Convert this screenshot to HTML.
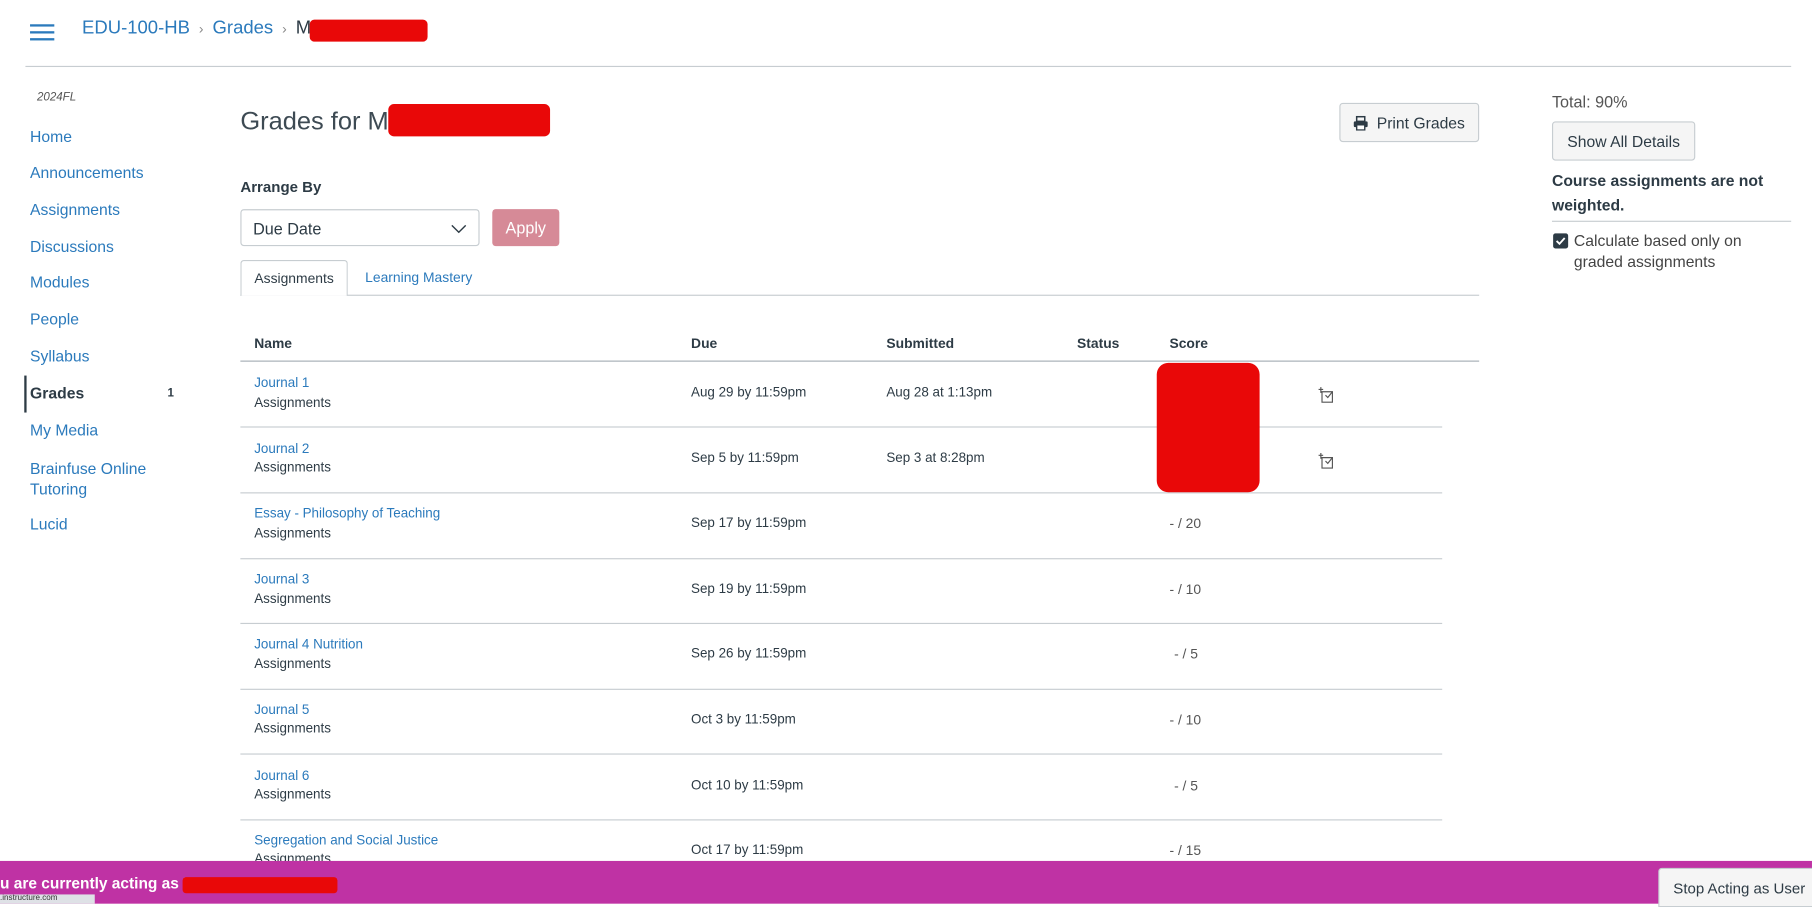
<!DOCTYPE html>
<html><head><meta charset="utf-8"><style>
*{box-sizing:border-box;margin:0;padding:0}
html,body{width:1812px;height:904px;overflow:hidden;background:#fff}
#s{position:absolute;left:0;top:0;width:1568px;height:782px;transform:scale(1.1556);transform-origin:0 0;font-family:"Liberation Sans",sans-serif;color:#2d3b45}
.a{position:absolute;white-space:nowrap}
.l{color:#2b7abc}
.nav{font-size:13.6px;left:26px}
.th{font-size:12px;font-weight:bold;top:290px}
.sep{position:absolute;left:208px;width:1040px;height:1px;background:#c7cdd1}
.t1{font-size:11.6px;color:#2b7abc;left:220px}
.t2{font-size:11.6px;left:220px}
.d{font-size:11.6px;left:598px}
.sc{font-size:12px;left:1012px;color:#555}
.btn{position:absolute;background:#f5f5f5;border:1px solid #c7cdd1;border-radius:3px;font-size:13.6px;display:flex;align-items:center;justify-content:center}
</style></head><body><div id="s">
<div class="a" style="left:26px;top:21px;width:21px;height:2px;background:#2b7abc"></div>
<div class="a" style="left:26px;top:27px;width:21px;height:2px;background:#2b7abc"></div>
<div class="a" style="left:26px;top:33px;width:21px;height:2px;background:#2b7abc"></div>
<div class="a l" style="left:71px;top:16px;font-size:16px">EDU-100-HB <span style="color:#888;font-size:12px">&nbsp;›&nbsp;</span> Grades <span style="color:#888;font-size:12px">&nbsp;›&nbsp;</span> <span style="color:#2d3b45">M</span></div>
<div class="a" style="left:268px;top:17px;width:102px;height:19px;background:#e90808;border-radius:4px"></div>
<div class="a" style="left:22px;top:57px;width:1528px;height:1px;background:#c7cdd1"></div>
<div class="a" style="left:32px;top:79px;font-size:10px;font-style:italic;color:#555">2024FL</div>
<div class="a nav l" style="top:111px">Home</div>
<div class="a nav l" style="top:142px">Announcements</div>
<div class="a nav l" style="top:174px">Assignments</div>
<div class="a nav l" style="top:206px">Discussions</div>
<div class="a nav l" style="top:237px">Modules</div>
<div class="a nav l" style="top:269px">People</div>
<div class="a nav l" style="top:301px">Syllabus</div>
<div class="a" style="left:21px;top:325px;width:2px;height:32px;background:#2d3b45"></div>
<div class="a nav" style="top:333px;font-weight:bold">Grades</div>
<div class="a" style="left:145px;top:335px;font-size:10px;font-weight:bold">1</div>
<div class="a nav l" style="top:365px">My Media</div>
<div class="a nav l" style="top:397px;line-height:18px">Brainfuse Online<br>Tutoring</div>
<div class="a nav l" style="top:446px">Lucid</div>
<div class="a" style="left:208px;top:92px;font-size:22px;color:#3d4a53">Grades for M</div>
<div class="a" style="left:336px;top:90px;width:140px;height:28px;background:#e90808;border-radius:5px"></div>
<div class="btn" style="left:1159px;top:89px;width:121px;height:34px"><svg width="13" height="13" viewBox="0 0 13 13" style="margin-right:7px"><rect x="3" y="1" width="7" height="4" fill="none" stroke="#2d3b45" stroke-width="1.3"/><rect x="0.5" y="5" width="12" height="5" rx="1" fill="#2d3b45"/><rect x="3" y="8" width="7" height="4.5" fill="#fff" stroke="#2d3b45" stroke-width="1.2"/></svg>Print Grades</div>
<div class="a" style="left:208px;top:154px;font-size:13px;font-weight:bold">Arrange By</div>
<div class="a" style="left:208px;top:181px;width:207px;height:32px;border:1px solid #c7cdd1;border-radius:3px;font-size:14px;padding:8px 10px">Due Date<svg width="14" height="8" style="position:absolute;right:10px;top:12px"><path d="M1 1l6 6 6-6" fill="none" stroke="#2d3b45" stroke-width="1.2"/></svg></div>
<div class="a" style="left:426px;top:181px;width:58px;height:32px;background:#d68a97;border-radius:3px;color:#fff;font-size:14px;display:flex;align-items:center;justify-content:center">Apply</div>
<div class="a" style="left:208px;top:255px;width:1072px;height:1px;background:#c7cdd1"></div>
<div class="a" style="left:208px;top:225px;width:93px;height:31px;border:1px solid #c7cdd1;border-bottom:none;background:#fff;border-radius:3px 3px 0 0;font-size:12px;text-align:center;padding-top:8px">Assignments</div>
<div class="a l" style="left:316px;top:233px;font-size:12px">Learning Mastery</div>
<div class="a th" style="left:220px">Name</div>
<div class="a th" style="left:598px">Due</div>
<div class="a th" style="left:767px">Submitted</div>
<div class="a th" style="left:932px">Status</div>
<div class="a th" style="left:1012px">Score</div>
<div class="a" style="left:208px;top:312px;width:1072px;height:1px;background:#a5afb5"></div>
<div class="sep" style="top:369px"></div><div class="sep" style="top:426px"></div><div class="sep" style="top:483px"></div><div class="sep" style="top:539px"></div><div class="sep" style="top:596px"></div><div class="sep" style="top:652px"></div><div class="sep" style="top:709px"></div>

<div class="a t1" style="top:325px">Journal 1</div><div class="a t2" style="top:342px">Assignments</div><div class="a d" style="top:333px">Aug 29 by 11:59pm</div><div class="a d" style="left:767px;top:333px">Aug 28 at 1:13pm</div>
<div class="a t1" style="top:382px">Journal 2</div><div class="a t2" style="top:398px">Assignments</div><div class="a d" style="top:390px">Sep 5 by 11:59pm</div><div class="a d" style="left:767px;top:390px">Sep 3 at 8:28pm</div>
<div class="a t1" style="top:438px">Essay - Philosophy of Teaching</div><div class="a t2" style="top:455px">Assignments</div><div class="a d" style="top:446px">Sep 17 by 11:59pm</div><div class="a sc" style="top:446px">- / 20</div>
<div class="a t1" style="top:495px">Journal 3</div><div class="a t2" style="top:512px">Assignments</div><div class="a d" style="top:503px">Sep 19 by 11:59pm</div><div class="a sc" style="top:503px">- / 10</div>
<div class="a t1" style="top:551px">Journal 4 Nutrition</div><div class="a t2" style="top:568px">Assignments</div><div class="a d" style="top:559px">Sep 26 by 11:59pm</div><div class="a sc" style="left:1016px;top:559px">- / 5</div>
<div class="a t1" style="top:608px">Journal 5</div><div class="a t2" style="top:624px">Assignments</div><div class="a d" style="top:616px">Oct 3 by 11:59pm</div><div class="a sc" style="top:616px">- / 10</div>
<div class="a t1" style="top:665px">Journal 6</div><div class="a t2" style="top:681px">Assignments</div><div class="a d" style="top:673px">Oct 10 by 11:59pm</div><div class="a sc" style="left:1016px;top:673px">- / 5</div>
<div class="a t1" style="top:721px">Segregation and Social Justice</div><div class="a t2" style="top:737px">Assignments</div><div class="a d" style="top:729px">Oct 17 by 11:59pm</div><div class="a sc" style="top:729px">- / 15</div>
<div class="a" style="left:1001px;top:314px;width:89px;height:112px;background:#e90808;border-radius:10px"></div>
<svg class="a" style="left:1141px;top:334px" width="15" height="15" viewBox="0 0 15 15"><path d="M2 1v5M0 3h4M3 5h9v9H3z" fill="none" stroke="#555" stroke-width="1"/><path d="M6 8l2 2 4-5" fill="none" stroke="#555" stroke-width="1"/></svg>
<svg class="a" style="left:1141px;top:391px" width="15" height="15" viewBox="0 0 15 15"><path d="M2 1v5M0 3h4M3 5h9v9H3z" fill="none" stroke="#555" stroke-width="1"/><path d="M6 8l2 2 4-5" fill="none" stroke="#555" stroke-width="1"/></svg>
<div class="a" style="left:1343px;top:80px;font-size:14px;color:#555">Total: 90%</div>
<div class="btn" style="left:1343px;top:105px;width:124px;height:34px">Show All Details</div>
<div class="a" style="left:1343px;top:146px;font-size:13.6px;font-weight:bold;line-height:21px">Course assignments are not<br>weighted.</div>
<div class="a" style="left:1343px;top:191px;width:207px;height:1px;background:#c7cdd1"></div>
<div class="a" style="left:1344px;top:202px;width:13px;height:13px;background:#2d3b45;border-radius:2px"><svg width="13" height="13"><path d="M3 6.5l2.5 2.5 4.5-5" fill="none" stroke="#fff" stroke-width="1.6"/></svg></div>
<div class="a" style="left:1362px;top:200px;font-size:13.6px;line-height:18px;color:#444">Calculate based only on<br>graded assignments</div>
<div class="a" style="left:0;top:745px;width:1568px;height:37px;background:#bf32a4"></div>
<div class="a" style="left:0;top:757px;font-size:13.4px;font-weight:bold;color:#fff">u are currently acting as B</div>
<div class="a" style="left:158px;top:759px;width:134px;height:14px;background:#e90808;border-radius:3px"></div>
<div class="btn" style="left:1435px;top:751px;width:140px;height:34px;border-radius:3px 0 0 0;justify-content:flex-start;padding-left:12px;font-size:13px">Stop Acting as User</div>
<div class="a" style="left:0;top:774px;width:82px;height:8px;background:#dee1e6;font-size:7px;color:#333;line-height:8px;overflow:hidden">.instructure.com</div>
</div></body></html>
